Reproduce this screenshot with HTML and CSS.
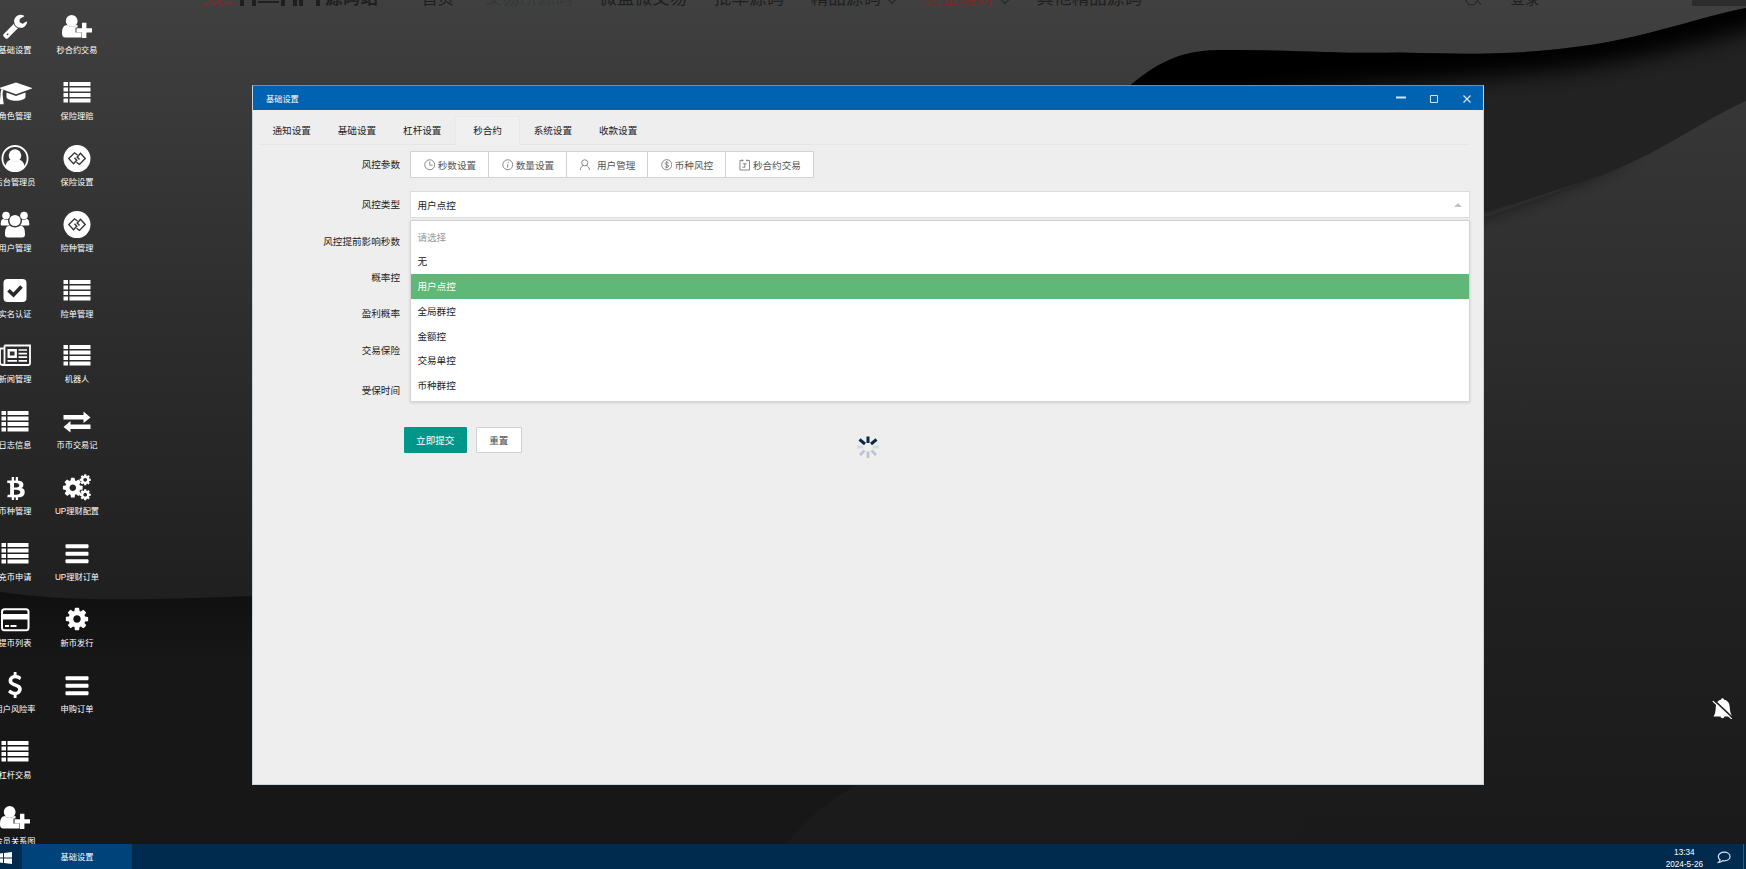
FILE: index.html
```html
<!DOCTYPE html>
<html lang="zh-CN">
<head>
    <meta charset="UTF-8">
    <meta name="viewport" content="width=device-width, initial-scale=1.0">
    <title>基础设置</title>
    <link rel="stylesheet" href="styles.css">
</head>
<body>
    <!-- Icon set -->
    <svg class="sprite">
        <symbol id="wrench" viewBox="0 0 1792 1792"><path d="M448 1472q0-26-19-45t-45-19-45 19-19 45 19 45 45 19 45-19 19-45zm644-420l-682 682q-37 37-90 37-52 0-91-37l-106-108q-38-36-38-90 0-53 38-91l681-681q39 98 114.500 173.500t173.500 114.500zm634-435q0 39-23 106-47 134-164.500 217.500t-258.500 83.500q-185 0-316.500-131.500t-131.500-316.500 131.500-316.500 316.500-131.500q58 0 121.500 16.500t107.500 46.500q16 11 16 28t-16 28l-293 169v224l193 107q5-3 79-48.500t135.500-81 70.500-35.500q15 0 23.500 10t8.500 25z"/></symbol>
        <symbol id="user-plus" viewBox="0 0 30 28"><path d="M0 20.500c0-5 1.500-8.500 5-8.500 3 2.500 6.500 2.500 9.500 0h1v2.500h-2v5h6v5H3.500C1 24.500 0 23 0 20.500z"/><circle cx="9.700" cy="8" r="5.900"/><path d="M20 9.700h4.400v5.500H30v4.400h-5.600V25H20v-5.400h-5.500v-4.400H20z"/></symbol>
        <symbol id="cap" viewBox="0 0 34 28"><path d="M18 3.500l16.500 5.700-16.500 6L1 9.200z"/><path d="M8.500 13.500l9.500 3.500 9.500-3.500v4.500c-1 5-18 5-19 0z"/><path d="M3.500 10l2 .7c-1 2-1 4-.8 6l1 8.500H1.500l1-8.500c0-2 0-4 1-6.700z"/></symbol>
        <symbol id="list" viewBox="0 0 28 28"><path d="M.5 3h4.500v4H.5zM6.500 3h21v4h-21zM.5 8.500h4.500v4H.5zM6.500 8.500h21v4h-21zM.5 14h4.500v4H.5zM6.500 14h21v4h-21zM.5 19.500h4.500v4H.5zM6.500 19.500h21v4h-21z"/></symbol>
        <symbol id="bars" viewBox="0 0 28 28"><rect x="2.500" y="4.200" width="23" height="4" rx="1"/><rect x="2.500" y="11.700" width="23" height="4" rx="1"/><rect x="2.500" y="19.200" width="23" height="4" rx="1"/></symbol>
        <symbol id="user-circle" viewBox="0 0 28 28"><circle cx="14" cy="13.600" r="12.600" fill="none" stroke="currentColor" stroke-width="1.800"/><circle cx="14" cy="10.600" r="6.300"/><path d="M4.500 21.500c.5-4 2.500-6.500 5.500-6.500 2.500 2 5.500 2 8 0 3 0 5 2.500 5.500 6.500-5 6-14 6-19 0z"/></symbol>
        <symbol id="gg" viewBox="0 0 28 28"><circle cx="14" cy="13.600" r="13.500"/><path d="M14.500 10L11.500 7.800 5.800 13.600l4.700 5.200 3.300-3.600-2.300-2.500M13.500 17.200l3 2.200 5.700-5.800-4.700-5.200-3.300 3.600 2.300 2.500" fill="none" stroke="#333" stroke-width="1.400"/></symbol>
        <symbol id="users" viewBox="0 0 30 28"><circle cx="6" cy="4.500" r="3.800"/><circle cx="24" cy="4.500" r="3.800"/><path d="M.7 13.500c0-4 1-5.500 3-5.500 1.500 1 3 1 4.300.5 0 3 .5 4 2 6H3c-1.500 0-2.300 0-2.300-1zM29.300 13.500c0-4-1-5.500-3-5.500-1.500 1-3 1-4.300.5 0 3-.5 4-2 6h7c1.500 0 2.300 0 2.300-1z"/><circle cx="15" cy="9.500" r="5.600"/><path d="M5 23.500c0-6 1-8.800 5-8.800 3 2.300 7 2.300 10 0 4 0 5 2.800 5 8.800 0 2-1 3-3 3H8c-2 0-3-1-3-3z"/></symbol>
        <symbol id="check" viewBox="0 0 28 28"><rect x="2.500" y="2" width="23" height="23" rx="4"/><path d="M7.500 13.300l5 4.700 8-8.500" fill="none" stroke="#292929" stroke-width="3.600"/></symbol>
        <symbol id="news" viewBox="0 0 32 28"><path d="M5.500 3.500h25.500v18c0 1-.5 1.500-1.500 1.500H4c-2 0-3-1-3-2.500V6.500h3.500M5.500 3.500V20.500c0 1.500-.5 2.500-1.500 2.500" fill="none" stroke="currentColor" stroke-width="1.800"/><path d="M9.700 8.200h7v6.600h-7z" fill="none" stroke="currentColor" stroke-width="2.400"/><path d="M19.500 8h8.500M19.500 11.700h8.500M19.500 15.200h8.500M8.500 18.900h9.500M19.500 18.900h8.500" stroke="currentColor" stroke-width="1.700"/></symbol>
        <symbol id="exchange" viewBox="0 0 28 28"><path d="M.5 7h20V3.500L27.500 9.500 20.500 15v-3.500H.5zM27.500 16.500h-20V13L.5 19l7 5.500V21h20z"/></symbol>
        <symbol id="bitcoin" viewBox="0 0 1280 1792"><path d="M1217 713q18 182-131 258 117 28 175 103t45 214q-7 71-32.500 125t-64.500 89-97 58.500-121.500 34.500-145.500 15v255h-154v-251q-80 0-122-1v252h-154v-255q-18 0-54-.5t-55-.5h-200l31-183h111q50 0 58-51v-402h16q-6-1-16-1v-287q-13-68-89-68h-111v-164l212 1q64 0 97-1v-252h154v247q82-2 122-2v-245h154v252q79 7 140 22.500t113 45 82.500 78 36.500 114.500zm-215 545q0-36-15-64t-37-46-57.500-30.500-65.500-18.500-74-9-69-3-64.500 1-47.500 1v338q8 0 37 .5t48 .5 53-1.500 58.500-4 57-8.500 55.500-14 47.500-21 39.500-30 24.500-40 9.500-51zm-71-476q0-33-12.500-58.500t-30.500-42-48-28-55-16.500-61.500-8-58-2.500-54 1-39.500.5v307q5 0 34.500.5t46.500 0 50-2 55-5.500 51.500-11 48.500-18.500 37-27 27-38.500 9-51z"/></symbol>
        <symbol id="cog" viewBox="0 0 1792 1792"><path d="M1152 896q0-106-75-181t-181-75-181 75-75 181 75 181 181 75 181-75 75-181zm512-109v222q0 12-8 23t-20 13l-185 28q-19 54-39 91 35 50 107 138 10 12 10 25t-9 23q-27 37-99 108t-94 71q-12 0-26-9l-138-108q-44 23-91 38-16 136-29 186-7 28-36 28h-222q-14 0-24.500-8.500t-11.500-21.500l-28-184q-49-16-90-37l-141 107q-10 9-25 9-14 0-25-11-126-114-165-168-7-10-7-23 0-12 8-23 15-21 51-66.500t54-70.500q-27-50-41-99l-183-27q-13-2-21-12.500t-8-23.500v-222q0-12 8-23t19-13l186-28q14-46 39-92-40-57-107-138-10-12-10-24 0-10 9-23 26-36 98.500-107.500t94.500-71.500q13 0 26 10l138 107q44-23 91-38 16-136 29-186 7-28 36-28h222q14 0 24.500 8.500t11.500 21.500l28 184q49 16 90 37l142-107q9-9 24-9 13 0 25 10 129 119 165 170 7 8 7 22 0 12-8 23-15 21-51 66.500t-54 70.500q26 50 41 98l183 28q13 2 21 12.500t8 23.500z"/></symbol>
        <symbol id="cogs" viewBox="0 0 28 28"><use href="#cog" x="-1.700" y="2.200" width="23" height="23"/><use href="#cog" x="15.700" y="-.7" width="13" height="13"/><use href="#cog" x="15.700" y="14.200" width="13" height="13"/></symbol>
        <symbol id="card" viewBox="0 0 30 28"><rect x="2" y="3.200" width="26.500" height="21" rx="2.500" fill="none" stroke="currentColor" stroke-width="2"/><path d="M2 8h26.500v5.500H2zM5 19h4v2H5zM10.500 19h6v2h-6z"/></symbol>
        <symbol id="dollar" viewBox="0 0 1792 1792"><path d="M1362 1185q0 153-99.500 263.500t-258.500 136.500v175q0 14-9 23t-23 9h-135q-13 0-22.500-9.500t-9.500-22.500v-175q-66-9-127.500-31t-101.500-44.500-74-48-46.500-37.500-17.500-18q-17-21-2-41l103-135q7-10 23-12 15-2 24 9l2 2q113 99 243 125 37 8 74 8 81 0 142.500-43t61.500-122q0-28-15-53t-33.500-42-58.500-37.500-66-32-80-32.500q-39-16-61.500-25t-61.500-26.500-62.500-31-56.500-35.500-53.500-42.500-43.500-49-35.500-58-21-66.500-8.500-78q0-138 98-242t255-134v-180q0-13 9.500-22.500t22.500-9.500h135q14 0 23 9t9 23v176q57 6 110.500 23t87 33.500 63.500 37.500 39 29 15 14q17 18 5 38l-81 146q-8 15-23 16-14 3-27-7-3-3-14.500-12t-39-26.500-58.500-32-74.500-26-85.500-11.500q-95 0-155 43t-60 111q0 26 8.500 48t29.500 41.500 39.500 33 56 31 60.500 27 70 27.500q53 20 81 31.500t76 35 75.500 42.500 62 50 53 63.500 31.500 76.500 13 94z"/></symbol>
    </svg>

    <!-- Wallpaper -->
    <svg class="wallpaper" viewBox="0 0 1746 869" preserveAspectRatio="none">
        <defs>
            <linearGradient id="base" x1="0" y1="0" x2="0" y2="1"><stop offset="0" stop-color="#404040"/><stop offset=".35" stop-color="#2e2e2e"/><stop offset=".7" stop-color="#1f1f1f"/><stop offset="1" stop-color="#1a1a1a"/></linearGradient>
            <linearGradient id="low" gradientUnits="userSpaceOnUse" x1="0" y1="592" x2="0" y2="660"><stop offset="0" stop-color="#101010"/><stop offset="1" stop-color="#171717"/></linearGradient>
            <linearGradient id="right" gradientUnits="userSpaceOnUse" x1="0" y1="120" x2="0" y2="840"><stop offset="0" stop-color="#363636"/><stop offset=".3" stop-color="#2d2d2d"/><stop offset=".65" stop-color="#202020"/><stop offset="1" stop-color="#1a1a1a"/></linearGradient>
            <filter id="soft" filterUnits="userSpaceOnUse" x="900" y="-150" width="1100" height="600"><feGaussianBlur stdDeviation="11"/></filter>
            <clipPath id="wave"><path d="M1080 140C1150 50 1190 50 1230 50C1300 50 1340 54 1400 52.500C1480 55 1530 54 1590 45C1650 36 1700 17 1746 8V700H1080z"/></clipPath>
            <clipPath id="swell"><path d="M1300 260L1400 235C1500 210 1550 192 1600 176C1660 153 1700 122 1746 101V869H1300z"/></clipPath>
        </defs>
        <rect width="1746" height="869" fill="url(#base)"/>
        <path d="M0 592C70 602 150 600 252 596L400 560V600H900V770C840 785 800 820 770 869H0z" fill="url(#low)"/>
        <g clip-path="url(#wave)">
            <rect x="1080" width="666" height="869" fill="#222"/>
            <path d="M1000 60L1180 20H1500C1600 20 1700-20 1800-40V15C1700 45 1620 65 1540 72C1440 82 1380 84 1300 92L1080 130z" fill="#030303" filter="url(#soft)"/>
        </g>
        <g clip-path="url(#swell)">
            <rect x="1300" y="90" width="446" height="779" fill="url(#right)"/>
            <path d="M1300 258L1400 233C1500 208 1550 188 1610 162L1700 90L1500 130z" fill="#121212" filter="url(#soft)"/>
        </g>
    </svg>

    <!-- Page header behind the desktop -->
    <div class="site-nav">
        <svg class="brand" width="123" height="7" viewBox="0 0 123 7"><path d="M1 6l8-5 3 4 6-5 1 6 7-4 6 2" fill="none" stroke="#742f2f" stroke-width="1.800"/><path d="M38 0h4v6h-4zM50 0h4v6h-4zM56 1h21v2H56zM79 0h4v6h-4zM91 0h4v6h-4zM97 0h4v6h-4zM114 0h4v6h-4z" fill="#1f1f1f"/></svg>
        <span class="site-name">源码站</span>
        <span class="home">首页</span>
        <span class="dim">交易所源码</span>
        <span>微盘微交易</span>
        <span>批单源码</span>
        <span class="more">精品源码</span>
        <span class="more hot">黄金理财</span>
        <span>其他精品源码</span>
        <svg class="search" width="18" height="7" viewBox="0 0 18 7"><path d="M1 0c1 6 9 7 11 1M12 0l4 5" fill="none" stroke="#222"/></svg>
        <span class="login">登录</span>
        <i></i>
    </div>

    <!-- Desktop shortcuts -->
    <div class="desktop">
        <div class="shortcut"><svg class="w26"><use href="#wrench"/></svg><p>基础设置</p></div>
        <div class="shortcut"><svg class="w28"><use href="#cap"/></svg><p>角色管理</p></div>
        <div class="shortcut"><svg><use href="#user-circle"/></svg><p>后台管理员</p></div>
        <div class="shortcut"><svg><use href="#users"/></svg><p>用户管理</p></div>
        <div class="shortcut"><svg><use href="#check"/></svg><p>实名认证</p></div>
        <div class="shortcut"><svg class="w32"><use href="#news"/></svg><p>新闻管理</p></div>
        <div class="shortcut"><svg><use href="#list"/></svg><p>日志信息</p></div>
        <div class="shortcut"><svg class="w26"><use href="#bitcoin"/></svg><p>币种管理</p></div>
        <div class="shortcut"><svg><use href="#list"/></svg><p>充币申请</p></div>
        <div class="shortcut"><svg><use href="#card"/></svg><p>提币列表</p></div>
        <div class="shortcut"><svg class="w26"><use href="#dollar"/></svg><p>用户风险率</p></div>
        <div class="shortcut"><svg><use href="#list"/></svg><p>杠杆交易</p></div>
        <div class="shortcut"><svg><use href="#user-plus"/></svg><p>会员关系图</p></div>
        <div class="shortcut"><svg><use href="#user-plus"/></svg><p>秒合约交易</p></div>
        <div class="shortcut"><svg><use href="#list"/></svg><p>保险理赔</p></div>
        <div class="shortcut"><svg><use href="#gg"/></svg><p>保险设置</p></div>
        <div class="shortcut"><svg><use href="#gg"/></svg><p>险种管理</p></div>
        <div class="shortcut"><svg><use href="#list"/></svg><p>险单管理</p></div>
        <div class="shortcut"><svg><use href="#list"/></svg><p>机器人</p></div>
        <div class="shortcut"><svg><use href="#exchange"/></svg><p>币币交易记</p></div>
        <div class="shortcut"><svg><use href="#cogs"/></svg><p>UP理财配置</p></div>
        <div class="shortcut"><svg><use href="#bars"/></svg><p>UP理财订单</p></div>
        <div class="shortcut"><svg class="w26"><use href="#cog"/></svg><p>新币发行</p></div>
        <div class="shortcut"><svg><use href="#bars"/></svg><p>申购订单</p></div>
    </div>

    <!-- Settings window -->
    <div class="window">
        <div class="window-title">
            <span>基础设置</span>
            <svg width="80" height="12" viewBox="0 0 80 12" fill="none" stroke="#d3e6f7"><path d="M1 5.500h10" stroke-width="2"/><path d="M35.500 3.500h7v7h-7z"/><path d="M68.500 3.500l7 7M75.500 3.500l-7 7" stroke-width="1.200"/></svg>
        </div>
        <div class="tabs">
            <div class="tab">通知设置</div>
            <div class="tab">基础设置</div>
            <div class="tab">杠杆设置</div>
            <div class="tab active">秒合约</div>
            <div class="tab">系统设置</div>
            <div class="tab">收款设置</div>
        </div>

        <form class="form">
            <div class="form-item tall">
                <label>风控参数</label>
                <div class="btn-group">
                    <button type="button" class="b1"><svg viewBox="0 0 12 12"><circle cx="6" cy="6" r="5.200"/><path d="M6 2.800V6.500h3"/></svg>秒数设置</button>
                    <button type="button" class="b2"><svg viewBox="0 0 12 12"><circle cx="6" cy="6" r="5.200"/><path d="M6.600 3v1M6.200 5L5.600 9"/></svg>数量设置</button>
                    <button type="button" class="b3"><svg viewBox="0 0 12 12"><circle cx="6" cy="4" r="3.200"/><path d="M1.500 11.500c0-2.500 1-4 3-4.700M7.500 6.800c2 .5 3 2 3.500 4.700"/></svg><span>用户管理</span></button>
                    <button type="button" class="b4"><svg viewBox="0 0 12 12"><circle cx="6" cy="6" r="5.300"/><path d="M8 4.300C7 3 4.300 3.200 4.300 4.700S8 6 8 7.500 5 9.200 4 7.800M6 2.300v7.400"/></svg>币种风控</button>
                    <button type="button" class="b5"><svg viewBox="0 0 12 12"><path d="M3.500 1.500H1v10h10v-10H8.500M3.500 1.500h1.200M7.300 1.500h1.200M3.500 .5v2M8.500 .5v2M4 5h4M6 5v3.500M3.500 8.500h3"/></svg>秒合约交易</button>
                </div>
            </div>
            <div class="form-item">
                <label>风控类型</label>
                <div class="select">
                    <div class="select-value">用户点控<i class="caret"></i></div>
                    <ul class="options">
                        <li class="tip">请选择</li>
                        <li>无</li>
                        <li class="selected">用户点控</li>
                        <li>全局群控</li>
                        <li>金额控</li>
                        <li>交易单控</li>
                        <li>币种群控</li>
                    </ul>
                </div>
            </div>
            <div class="form-item"><label>风控提前影响秒数</label></div>
            <div class="form-item"><label>概率控</label></div>
            <div class="form-item"><label>盈利概率</label></div>
            <div class="form-item tall"><label>交易保险</label></div>
            <div class="form-item"><label>受保时间</label></div>
            <div class="form-actions">
                <button type="button" class="btn primary">立即提交</button>
                <button type="button" class="btn">重置</button>
            </div>
        </form>

        <svg class="loading" viewBox="-12 -12 24 24">
            <g stroke="#b9c6d2" stroke-width="2.800"><path d="M0 4.500v6.500M-3.500 3.500l-4.500 4.500M3.500 3.500l4.500 4.500"/><path d="M-5 0h-6M5 0h6" stroke="#d3dbe3"/></g>
            <path d="M0-4v-6.500M-3-3l-5.500-4.500M3-3l5.500-4.500" stroke="#0d2a44" stroke-width="3"/>
        </svg>
    </div>

    <svg class="bell" viewBox="0 0 22 22"><path d="M1.500 19.500c2-3 2-6 2.300-9.500C4 5.500 6 3.500 9 2.700c0-2 3-2 3 0 3.500.8 5.500 3 5.700 7.300.3 4 .8 6 2.300 9.500h-7.500c-.5 2.300-3.500 2.300-4 0z"/><path d="M.8 4l19 18" stroke="#fff" stroke-width="1.200"/><path d="M1.500 2.500L21 21" stroke="#1d1d1d" stroke-width="1.700"/></svg>

    <!-- Taskbar -->
    <div class="taskbar">
        <div class="start"><svg width="12" height="12" viewBox="0 0 12 12"><path d="M-2 1.800l5-.7v4.500h-5zM4 1l8-1v5.600H4zM-2 6.400h5v4.500l-5-.7zM4 6.400h8V12l-8-1z"/></svg></div>
        <div class="task">基础设置</div>
        <div class="clock">13:34<br>2024-5-26</div>
        <svg class="chat" width="14" height="13" viewBox="0 0 14 13"><path d="M7.200 1.200c3.300 0 5.800 1.800 5.800 4.300s-2.500 4.400-5.800 4.400c-.7 0-1.200 0-1.700-.2-1 1-2.300 1.700-4 1.800.9-.8 1.400-1.600 1.600-2.700C1.800 8 1.300 6.900 1.300 5.500c0-2.500 2.600-4.300 5.900-4.300z" fill="none" stroke="#d5e4f0" stroke-width="1.200"/></svg>
        <i class="peek"></i>
    </div>
</body>
</html>
```
FILE: styles.css
```css
* {
    margin: 0;
    padding: 0;
    box-sizing: border-box;
}

body {
    width: 1746px;
    height: 869px;
    overflow: hidden;
    position: relative;
    background: #1c1c1c;
    color: #222;
    font-family: "Liberation Sans", "Noto Sans CJK SC", sans-serif;
    font-size: 9.6px;
}

button {
    font-family: inherit;
    font-size: inherit;
}

.sprite {
    position: absolute;
    width: 0;
    height: 0;
}

.wallpaper {
    position: absolute;
    left: 0;
    top: 0;
    width: 1746px;
    height: 869px;
}

/* Strip of the outer page showing at the top */
.site-nav {
    position: absolute;
    left: 0;
    top: 0;
    width: 1746px;
    height: 7px;
    padding-left: 202px;
    overflow: hidden;
    display: flex;
    align-items: flex-end;
    font-size: 17.6px;
    line-height: 17px;
    color: #1f1f1f;
    white-space: nowrap;
}

.site-nav span {
    margin-right: 26.5px;
    flex: none;
}

.site-nav svg {
    flex: none;
}

.site-nav .site-name {
    font-weight: bold;
    margin-right: 44px;
}

.site-nav .home {
    font-size: 16px;
    margin-right: 31px;
}

.site-nav .dim {
    color: #343a38;
}

.site-nav .hot {
    color: #742b2b;
}

.site-nav .more::after {
    content: "";
    display: inline-block;
    width: 5px;
    height: 5px;
    margin: 0 2px 1px 8px;
    border: solid #252525;
    border-width: 0 1px 1px 0;
    transform: rotate(45deg);
}

.site-nav .search {
    margin-left: 296px;
    margin-right: 28px;
}

.site-nav .login {
    font-size: 14.4px;
    line-height: 15px;
    margin-right: auto;
}

.site-nav i {
    width: 54px;
    height: 6px;
    margin-bottom: 1px;
    background: #2c2c2c;
}

/* Desktop shortcuts */
.desktop {
    position: absolute;
    left: -16px;
    top: 0;
    display: grid;
    grid-template-rows: repeat(13, 65.9px);
    grid-auto-columns: 62px;
    grid-auto-flow: column;
}

.shortcut {
    padding-top: 13px;
    display: flex;
    flex-direction: column;
    align-items: center;
    color: #fff;
    font-size: 8.2px;
    line-height: 10px;
    white-space: nowrap;
}

.shortcut svg {
    width: 30px;
    height: 28px;
    margin-bottom: 5px;
    fill: currentColor;
    flex: none;
}

.shortcut .w26 {
    height: 26px;
    margin: 0 0 7px;
}

.shortcut .w28 {
    width: 34px;
}

.shortcut .w32 {
    width: 32px;
}

/* Window */
.window {
    position: absolute;
    left: 252px;
    top: 85px;
    width: 1232px;
    height: 700px;
    background: #eee;
    border: 1px solid #c9d3dc;
    border-top-color: #5c93c4;
}

.window-title {
    height: 24px;
    background: #0063b1;
    color: #fff;
    display: flex;
    align-items: center;
    justify-content: space-between;
    padding: 0 8px 0 13px;
    font-size: 8.2px;
}

.tabs {
    display: flex;
    margin: 6px 13px 0 6px;
    height: 29px;
    border-bottom: 1px solid #e6e6e6;
}

.tab {
    width: 65.300px;
    line-height: 30px;
    text-align: center;
}

.tab.active {
    border: 1px solid #e9e9e9;
    border-bottom: 0;
    line-height: 28px;
    height: 29px;
    background: #f0f0f0;
}

.form {
    padding: 6.300px 13.500px 0 0;
}

.form-item {
    display: flex;
    height: 26.400px;
    margin-bottom: 10px;
}

.form-item.tall {
    height: 30px;
}

.form-item label {
    width: 147px;
    margin-right: 10.400px;
    line-height: 27.600px;
    text-align: right;
}

.btn-group {
    display: flex;
    height: 26.400px;
}

.btn-group button {
    display: flex;
    align-items: center;
    justify-content: center;
    gap: 2.500px;
    padding-top: 1px;
    background: #fff;
    border: 1px solid #d2d2d2;
    border-left-width: 0;
    color: #555;
    white-space: nowrap;
}

.btn-group .b1 {
    width: 79px;
    border-left-width: 1px;
}

.btn-group .b2 {
    width: 78px;
}

.btn-group .b3 {
    width: 81px;
    gap: 6px;
}

.btn-group .b4 {
    width: 78px;
}

.btn-group .b5 {
    width: 88px;
}

.btn-group svg {
    width: 11.500px;
    height: 11.500px;
    fill: none;
    stroke: #777;
    stroke-width: .9;
}

.select {
    flex: 1;
    position: relative;
}

.select-value {
    height: 26.400px;
    padding: 1px 6.500px 0 6px;
    display: flex;
    align-items: center;
    justify-content: space-between;
    background: #fff;
    border: 1px solid #dcdcdc;
}

.caret {
    border: 4px solid transparent;
    border-top-width: 0;
    border-bottom: 4px solid #c2c2c2;
}

.options {
    position: absolute;
    left: 0;
    top: 29px;
    width: 100%;
    height: 182px;
    padding: 3.300px 0;
    list-style: none;
    background: #fff;
    border: 1px solid #d2d2d2;
    box-shadow: 0 1px 3px rgba(0, 0, 0, .12);
}

.options li {
    height: 24.750px;
    line-height: 25.500px;
    padding-left: 6px;
}

.options .tip {
    color: #999;
}

.options .selected {
    background: #5fb878;
    color: #fff;
}

.form-actions {
    display: flex;
    gap: 9px;
    margin-top: 23.600px;
    padding-left: 150.500px;
}

.btn {
    width: 45.500px;
    height: 26px;
    background: #fff;
    border: 1px solid #d0d0d0;
    border-radius: 1px;
    color: #444;
}

.btn.primary {
    width: 63.500px;
    background: #009688;
    border-color: #009688;
    color: #fff;
}

.loading {
    position: absolute;
    left: 603px;
    top: 349px;
    width: 24px;
    height: 24px;
}

.bell {
    position: absolute;
    left: 1712px;
    top: 697px;
    width: 22px;
    height: 22px;
    fill: #fff;
}

/* Taskbar */
.taskbar {
    position: absolute;
    left: 0;
    bottom: 0;
    width: 1746px;
    height: 25px;
    display: flex;
    align-items: center;
    background: #002b4f;
    color: #fff;
    font-size: 8.2px;
}

.start {
    width: 22px;
    height: 12px;
    padding-top: 1px;
    fill: #fff;
}

.start svg {
    display: block;
}

.task {
    width: 110px;
    height: 25px;
    line-height: 28px;
    text-align: center;
    background: #00427a;
}

.clock {
    margin-left: auto;
    margin-right: 14px;
    padding-top: 4px;
    line-height: 12px;
    text-align: center;
}

.chat {
    margin-top: 2px;
}

.peek {
    width: 1px;
    height: 25px;
    margin: 0 2px 0 12px;
    background: #33567a;
}
```
